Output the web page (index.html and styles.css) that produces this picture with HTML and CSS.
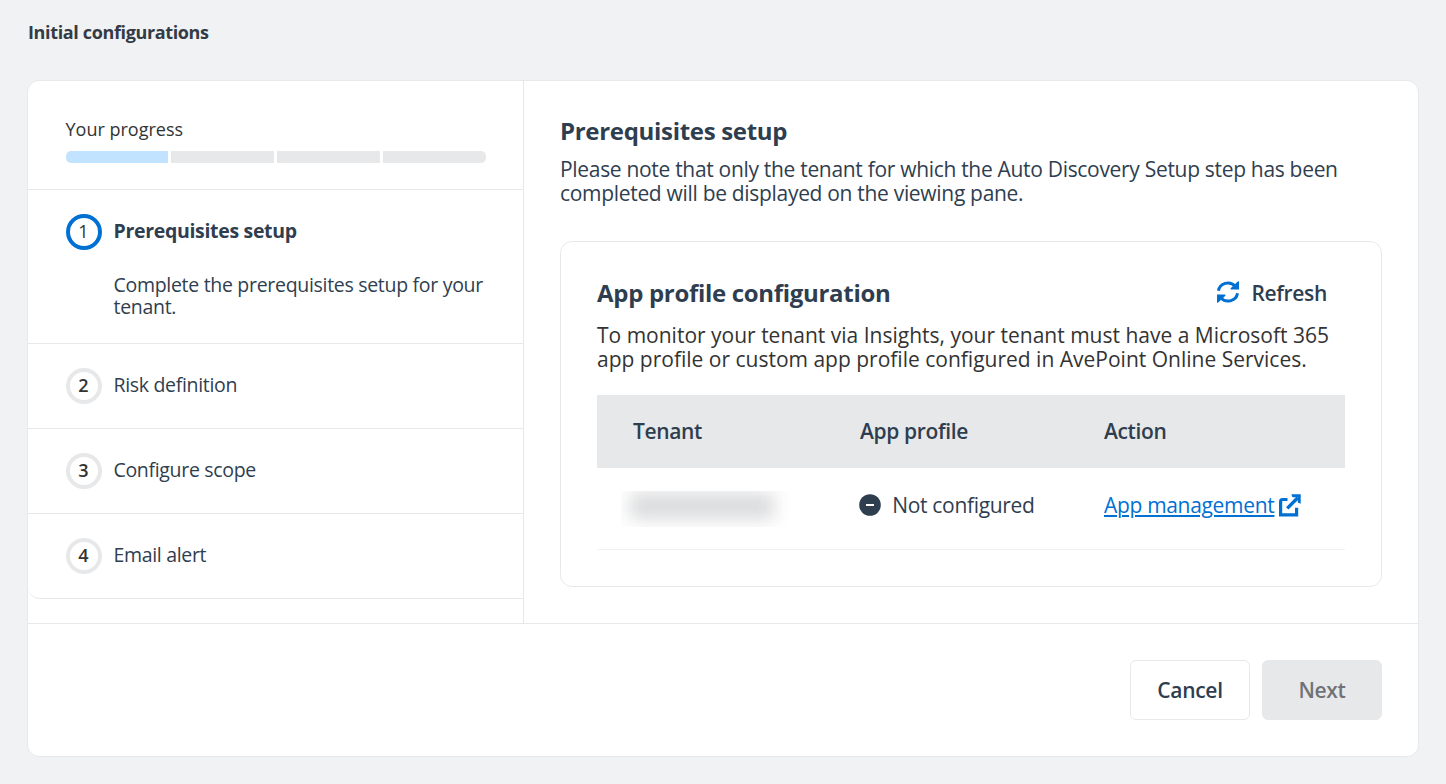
FILE: index.html
```html
<!DOCTYPE html>
<html lang="en">
<head>
<meta charset="utf-8">
<title>Initial configurations</title>
<link rel="stylesheet" href="styles.css">
</head>
<body>
<h1 class="page-title">Initial configurations</h1>
<main class="wizard">
  <div class="wizard-body">
    <aside class="sidebar">
      <section class="progress">
        <div class="progress-label">Your progress</div>
        <div class="progress-bar"><i class="segment done"></i><i class="segment"></i><i class="segment"></i><i class="segment"></i></div>
      </section>
      <ol class="steps">
        <li class="step active">
          <span class="step-number">1</span>
          <div class="step-text">
            <div class="step-name">Prerequisites setup</div>
            <p class="step-description">Complete the prerequisites setup for your<br>tenant.</p>
          </div>
        </li>
        <li class="step"><span class="step-number">2</span><div class="step-name">Risk definition</div></li>
        <li class="step"><span class="step-number">3</span><div class="step-name">Configure scope</div></li>
        <li class="step"><span class="step-number">4</span><div class="step-name">Email alert</div></li>
      </ol>
    </aside>
    <section class="content">
      <h2 class="heading">Prerequisites setup</h2>
      <p class="lead">Please note that only the tenant for which the Auto Discovery Setup step has been<br>completed will be displayed on the viewing pane.</p>
      <div class="panel">
        <div class="panel-head">
          <h3 class="heading">App profile configuration</h3>
          <button class="refresh">
            <svg class="refresh-icon" viewBox="0 0 22 22" width="22" height="22">
              <path d="M1.5 9.8A9.5 9 0 0 1 18 5M20.5 12.2A9.5 9 0 0 1 4 17" fill="none" stroke="#0070d2" stroke-width="3"/>
              <path d="M22 .5V8.4H14L13.4 7.4L21 .3ZM0 21.5V13.6H8L8.6 14.6L1 21.7Z" fill="#0070d2"/>
            </svg>
            <span>Refresh</span>
          </button>
        </div>
        <p class="panel-text">To monitor your tenant via Insights, your tenant must have a Microsoft 365<br>app profile or custom app profile configured in AvePoint Online Services.</p>
        <div class="table">
          <div class="row table-head"><span>Tenant</span><span>App profile</span><span>Action</span></div>
          <div class="row table-row">
            <span class="redacted"><i class="redacted-smudge"></i></span>
            <span class="status">
              <svg viewBox="0 0 22 22" width="22" height="22"><circle cx="11" cy="11" r="10.8" fill="#2f3e4f"/><path d="M7 11h8" stroke="#fff" stroke-width="2"/></svg>
              <span>Not configured</span>
            </span>
            <a class="link"><span class="link-text">App management</span>
              <svg viewBox="0 0 22 23" width="22" height="23"><path d="M8.5 5.5H3.5Q1.6 5.5 1.6 7.5V20.9H17.6V13.8" fill="none" stroke="#0070d2" stroke-width="3.2"/><path d="M8.2 14.4L18.8 3.8" stroke="#0070d2" stroke-width="3.4"/><path d="M12.3 .3H21.7V9.7L18.8 8.6V3.2H13.5Z" fill="#0070d2"/></svg>
            </a>
          </div>
        </div>
      </div>
    </section>
  </div>
  <footer class="footer"><button class="button">Cancel</button><button class="button disabled">Next</button></footer>
</main>
</body>
</html>
```
FILE: styles.css
```css
* { box-sizing: border-box; margin: 0; padding: 0; }
body { width: 1446px; height: 784px; padding: 0 27px; overflow: hidden; background: #f1f2f4; color: #2f3e4f; font-family: "Open Sans", sans-serif; letter-spacing: -0.32px; }
button { font: inherit; color: inherit; letter-spacing: inherit; border: 0; background: none; }
.page-title { height: 80px; padding: 20px 0 0 1px; font-size: 18px; line-height: 24px; font-weight: 700; color: #333b45; letter-spacing: -0.36px; }
.wizard { width: 1392px; height: 677px; border: 1px solid #e7e8ea; border-radius: 12px; background: #fff; overflow: hidden; }
.wizard-body { display: flex; height: 543px; border-bottom: 1px solid #e7e8ea; }
.sidebar { width: 496px; border-right: 1px solid #e7e8ea; font-size: 19.5px; }
.progress { height: 109px; padding: 36px 37px 0 37.5px; border-bottom: 1px solid #e7e8ea; }
.progress-label { height: 34px; line-height: 24px; font-size: 18px; letter-spacing: 0; color: #333; }
.progress-bar { display: flex; gap: 3px; height: 12px; border-radius: 5px; overflow: hidden; }
.segment { flex: 1; background: #e7e8ea; }
.segment.done { background: #c2e3ff; }
.steps { list-style: none; border-bottom: 1px solid #e7e8ea; border-radius: 0 0 0 12px; }
.step { display: flex; gap: 12px; height: 85px; padding: 23px 0 0 37.5px; border-bottom: 1px solid #e7e8ea; }
.step:last-child { border-bottom: 0; height: 84px; }
.step.active { height: 154px; }
.step-number { flex: none; width: 36px; height: 36px; border: 3.5px solid #e7e8ea; margin-top: .5px; border-radius: 50%; text-align: center; line-height: 28px; font-size: 18px; letter-spacing: 0; font-weight: 600; color: #333; }
.active .step-number { border-color: #0070d2; font-weight: 500; }
.step-number { border-width: 4px; line-height: 27px; }
.step-name { line-height: 35px; white-space: nowrap; }
.active .step-name { font-weight: 700; }
.step-description { margin-top: 26px; line-height: 22px; white-space: nowrap; letter-spacing: -0.3px; }
.content { flex: 1; padding: 35px 36px 0; font-size: 21px; }
.heading { font-size: 24px; line-height: 30px; font-weight: 700; letter-spacing: -0.31px; }
.lead { margin-top: 11px; line-height: 24px; white-space: nowrap; letter-spacing: -0.31px; }
.panel { width: 822px; height: 346px; margin-top: 36px; padding: 36px; border: 1px solid #e7e8ea; border-radius: 12px; }
.panel-head { display: flex; justify-content: space-between; height: 30px; padding-right: 18px; }
.refresh { display: flex; align-items: center; gap: 13px; font-weight: 600; }
.refresh-icon { margin: 0 -0.5px 2px 0; }
.panel-text { margin-top: 15px; line-height: 24px; white-space: nowrap; letter-spacing: 0; color: #333; }
.table { margin-top: 24px; }
.row { display: grid; grid-template-columns: 227px 244px 1fr; align-items: center; padding-left: 36px; }
.table-head { height: 73px; padding-bottom: 2px; background: #e7e8ea; font-weight: 600; letter-spacing: -0.36px; }
.table-row { height: 82px; border-bottom: 1px solid #f0f1f2; padding-bottom: 7px; }
.redacted { width: 172px; height: 36px; margin: 7px 0 0 -12px; overflow: hidden; }
.redacted-smudge { display: block; width: 144px; height: 26px; margin: 2px 0 0 9px; background: #d9dadc; filter: blur(9px); }
.status { display: flex; align-items: center; gap: 11px; margin-left: -0.75px; }
.link { display: flex; align-items: center; gap: 5px; color: #0070d2; }
.link-text { text-decoration: underline; text-decoration-thickness: 2px; text-underline-offset: 2px; }
.footer { display: flex; justify-content: flex-end; gap: 12px; padding: 36px 36px 0; }
.button { width: 120px; height: 60px; border: 1px solid #e7e8ea; border-radius: 6px; font-size: 21px; font-weight: 600; letter-spacing: -0.3px; }
.disabled { background: #e7e8ea; color: #6f7377; }
```
